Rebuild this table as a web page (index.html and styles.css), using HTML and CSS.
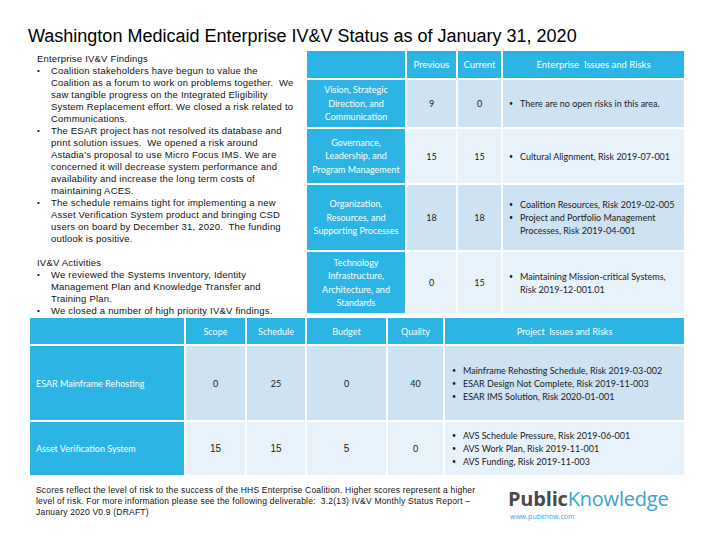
FILE: index.html
```html
<!DOCTYPE html>
<html lang="en">
<head>
<meta charset="utf-8">
<title>Washington Medicaid Enterprise IV&amp;V Status</title>
<link rel="stylesheet" href="styles.css">
</head>
<body>
<div class="page">
  <h1 class="title">Washington Medicaid Enterprise IV&amp;V Status as of January 31, 2020</h1>

  <div class="top">
    <div class="findings">
      <div class="sec-title">Enterprise IV&amp;V Findings</div>
      <ul class="blist">
        <li>Coalition stakeholders have begun to value the Coalition as a forum to work on problems together.&nbsp; We saw tangible progress on the Integrated Eligibility System Replacement effort. We closed a risk related to Communications.</li>
        <li>The ESAR project has not resolved its database and print solution issues.&nbsp; We opened a risk around Astadia’s proposal to use Micro Focus IMS. We are concerned it will decrease system performance and availability and increase the long term costs of maintaining ACES.</li>
        <li>The schedule remains tight for implementing a new Asset Verification System product and bringing CSD users on board by December 31, 2020.&nbsp; The funding outlook is positive.</li>
      </ul>
      <div class="sec-title sec-gap">IV&amp;V Activities</div>
      <ul class="blist">
        <li>We reviewed the Systems Inventory, Identity Management Plan and Knowledge Transfer and Training Plan.</li>
        <li>We closed a number of high priority IV&amp;V findings.</li>
      </ul>
    </div>

    <table class="grid ent">
      <colgroup><col class="c-area"><col class="c-prev"><col class="c-cur"><col class="c-risk"></colgroup>
      <tr class="head">
        <th></th><th>Previous</th><th>Current</th><th>Enterprise&nbsp; Issues and Risks</th>
      </tr>
      <tr class="r1 odd">
        <th class="label">Vision, Strategic Direction, and Communication</th>
        <td class="num">9</td><td class="num">0</td>
        <td class="risks"><ul class="rlist"><li>There are no open risks in this area.</li></ul></td>
      </tr>
      <tr class="r2 even">
        <th class="label">Governance, Leadership, and Program Management</th>
        <td class="num">15</td><td class="num">15</td>
        <td class="risks"><ul class="rlist"><li>Cultural Alignment, Risk 2019-07-001</li></ul></td>
      </tr>
      <tr class="r3 odd">
        <th class="label">Organization, Resources, and Supporting Processes</th>
        <td class="num">18</td><td class="num">18</td>
        <td class="risks"><ul class="rlist"><li>Coalition Resources, Risk 2019-02-005</li><li>Project and Portfolio Management Processes, Risk 2019-04-001</li></ul></td>
      </tr>
      <tr class="r4 even">
        <th class="label">Technology Infrastructure, Architecture, and Standards</th>
        <td class="num">0</td><td class="num">15</td>
        <td class="risks"><ul class="rlist"><li>Maintaining Mission-critical Systems, Risk 2019-12-001.01</li></ul></td>
      </tr>
    </table>
  </div>

  <table class="grid proj">
    <colgroup><col class="p-name"><col class="p-scope"><col class="p-sched"><col class="p-budget"><col class="p-qual"><col class="p-risk"></colgroup>
    <tr class="head">
      <th></th><th>Scope</th><th>Schedule</th><th>Budget</th><th>Quality</th><th>Project&nbsp; Issues and Risks</th>
    </tr>
    <tr class="q1 odd">
      <th class="pname">ESAR Mainframe Rehosting</th>
      <td class="num">0</td><td class="num">25</td><td class="num">0</td><td class="num">40</td>
      <td class="risks"><ul class="rlist"><li>Mainframe Rehosting Schedule, Risk 2019-03-002</li><li>ESAR Design Not Complete, Risk 2019-11-003</li><li>ESAR IMS Solution, Risk 2020-01-001</li></ul></td>
    </tr>
    <tr class="q2 even">
      <th class="pname">Asset Verification System</th>
      <td class="num arial">15</td><td class="num arial">15</td><td class="num arial">5</td><td class="num">0</td>
      <td class="risks"><ul class="rlist"><li>AVS Schedule Pressure, Risk 2019-06-001</li><li>AVS Work Plan, Risk 2019-11-001</li><li>AVS Funding, Risk 2019-11-003</li></ul></td>
    </tr>
  </table>

  <div class="footer">
    <p class="note">Scores reflect the level of risk to the success of the HHS Enterprise Coalition. Higher scores represent a higher level of risk. For more information please see the following deliverable:&nbsp; 3.2(13) IV&amp;V Monthly Status Report – January 2020 V0.9 (DRAFT)</p>
    <div class="logo">
      <div class="logo-word"><span class="lw-public">Public</span><span class="lw-know">Knowledge</span></div>
      <div class="logo-url">www.pubknow.com</div>
    </div>
  </div>
</div>
</body>
</html>
```

FILE: styles.css
```css
* { box-sizing: border-box; }

html, body {
  margin: 0;
  padding: 0;
  background: #ffffff;
}

body {
  width: 720px;
  height: 540px;
  overflow: hidden;
  font-family: "Liberation Sans", Arial, sans-serif;
  color: #111111;
}

.page {
  padding: 26px 0 0 28px;
}

.title {
  margin: 0;
  font-size: 18px;
  font-weight: normal;
  line-height: 20px;
  color: #000000;
}

.top {
  display: flex;
  align-items: flex-start;
  margin-top: 3px;
  height: 267px;
}

.findings {
  width: 277px;
  flex: none;
  padding: 4px 9px 0 9px;
  font-size: 9.5px;
  letter-spacing: 0.2px;
  line-height: 12px;
  color: #111111;
}

.sec-gap { margin-top: 12px; }

.blist {
  list-style: none;
  margin: 0;
  padding: 0;
}

.blist li {
  display: grid;
  grid-template-columns: 14px 1fr;
}

.blist li::before {
  content: "•";
  font-size: 8px;
}

/* tables */
.grid {
  border-collapse: separate;
  border-spacing: 2px;
  table-layout: fixed;
  font-family: Lato, "Open Sans", sans-serif;
  font-size: 9px;
  color: #1b1b1b;
}

.grid th, .grid td {
  padding: 0;
  vertical-align: middle;
}

.grid .head th {
  background: #2bb4e4;
  color: #ffffff;
  font-weight: normal;
  text-align: center;
}

.grid .odd td { background: #cde3f3; }
.grid .even td { background: #e8f2fa; }

.grid .label {
  background: #2bb4e4;
  color: #ffffff;
  font-weight: normal;
  text-align: center;
  line-height: 13.5px;
  padding: 0 4px;
}

.grid .num { text-align: center; }
.grid .arial { font-family: "Liberation Sans", Arial, sans-serif; font-size: 10px; }

.rlist {
  list-style: none;
  margin: 0;
  padding: 0;
}

.rlist li {
  display: grid;
  grid-template-columns: 11px 1fr;
  line-height: 13px;
}

.rlist li::before {
  content: "•";
  font-size: 7px;
}

/* enterprise table */
.ent { width: 381px; }
.ent .c-area { width: 98px; }
.ent .c-prev { width: 49px; }
.ent .c-cur { width: 43px; }
.ent .c-risk { width: 181px; }

.ent .head th { height: 27px; font-size: 9.5px; }
.ent .r1 th, .ent .r1 td { height: 47px; }
.ent .r2 th, .ent .r2 td { height: 54px; }
.ent .r3 th, .ent .r3 td { height: 65px; }
.ent .r4 th, .ent .r4 td { height: 61px; }
.ent .risks { padding: 0 6px 0 6px; }

/* project table */
.proj { width: 658px; }
.proj .p-name { width: 154px; }
.proj .p-scope { width: 59px; }
.proj .p-sched { width: 58px; }
.proj .p-budget { width: 79px; }
.proj .p-qual { width: 55px; }
.proj .p-risk { width: 239px; }

.proj .head th { height: 26px; }
.proj .q1 th, .proj .q1 td { height: 74px; }
.proj .q2 th, .proj .q2 td { height: 53px; }

.proj .pname {
  background: #2bb4e4;
  color: #ffffff;
  font-weight: normal;
  text-align: left;
  padding-left: 6px;
}

.proj .risks { padding: 0 6px 0 7px; }

/* footer */
.footer {
  display: flex;
  align-items: flex-start;
  padding-top: 8px;
}

.note {
  margin: 0;
  width: 462px;
  flex: none;
  padding: 0 2px 0 8px;
  font-size: 8.5px;
  letter-spacing: 0.2px;
  line-height: 11px;
  color: #111111;
}

.logo {
  margin: 3px 0 0 18px;
  display: flex;
  flex-direction: column;
}

.logo-word {
  font-family: "Open Sans", sans-serif;
  font-size: 20px;
  line-height: 22px;
  letter-spacing: -0.2px;
}

.lw-public {
  font-weight: bold;
  color: #4a4a4a;
}

.lw-know {
  color: #3aa0d4;
}

.logo-url {
  font-family: "Open Sans", sans-serif;
  font-size: 7px;
  line-height: 9px;
  color: #3aa0d4;
  padding-left: 2px;
  margin-top: 2px;
}
```
